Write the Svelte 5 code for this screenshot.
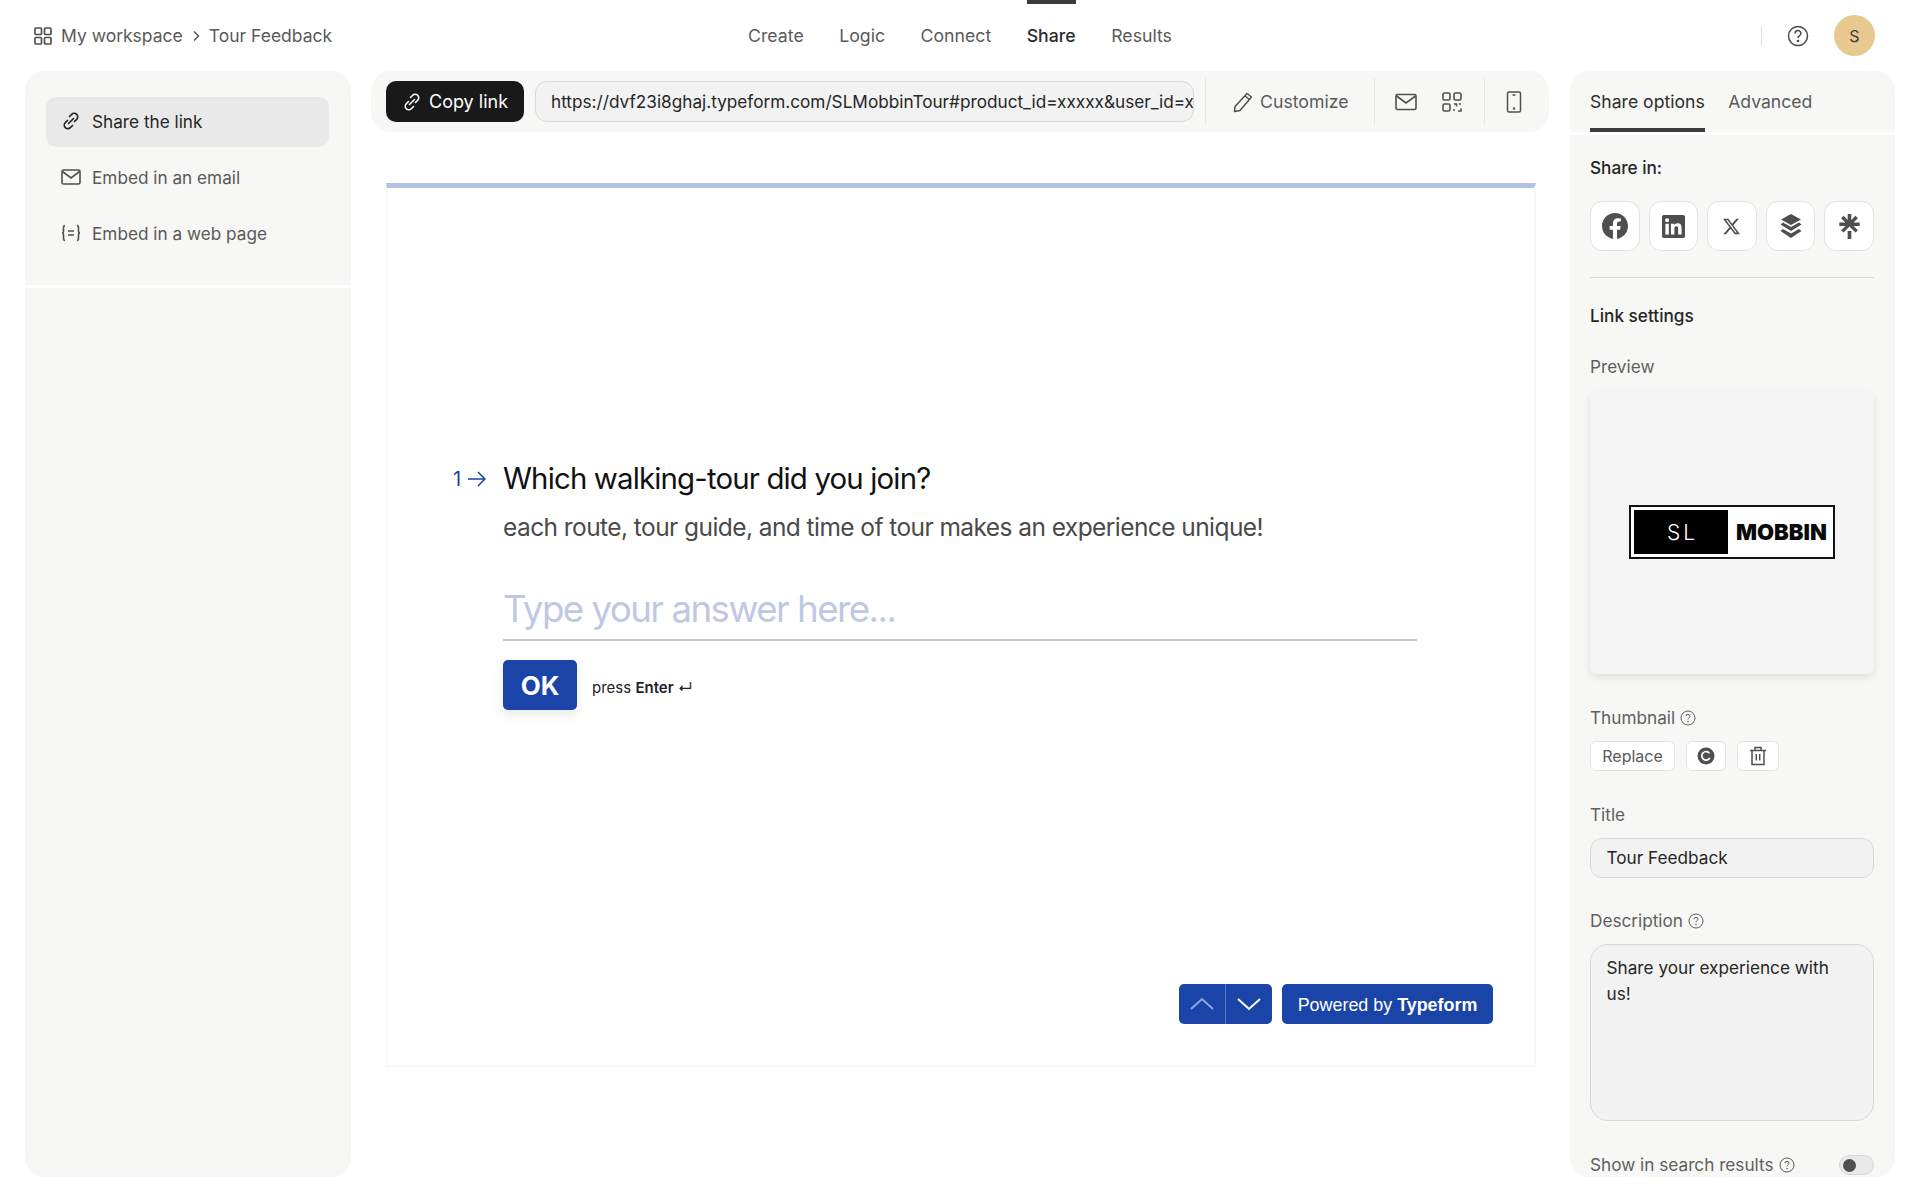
<script>
  let navItems = ['Create', 'Logic', 'Connect', 'Share', 'Results'];
  let activeNav = 'Share';
</script>

<div class="page">
  <header class="topbar">
    <div class="crumbs">
      <svg width="20" height="20" viewBox="0 0 20 20" fill="none" stroke="#4f4f4f" stroke-width="1.7">
        <rect x="2" y="2" width="6.5" height="6.5" rx="1" /><rect x="11.5" y="2" width="6.5" height="6.5" rx="1" />
        <rect x="2" y="11.5" width="6.5" height="6.5" rx="1" /><rect x="11.5" y="11.5" width="6.5" height="6.5" rx="1" />
      </svg>
      <span>My workspace</span>
      <svg width="10" height="12" viewBox="0 0 10 12" fill="none" stroke="#4f4f4f" stroke-width="1.4"><path d="M3 1.5 7.5 6 3 10.5" /></svg>
      <span>Tour Feedback</span>
    </div>
    <nav class="nav">
      {#each navItems as item}
        <span class="nav-item" class:active={item === activeNav}>{item}</span>
      {/each}
    </nav>
    <div class="top-right">
      <span class="top-div"></span>
      <svg width="22" height="22" viewBox="0 0 22 22" fill="none" stroke="#4a4a4a" stroke-width="1.5">
        <circle cx="11" cy="11" r="9.5" />
        <path d="M8 8.6a3 3 0 0 1 6 0c0 2-3 2.2-3 4.4" />
        <circle cx="11" cy="16" r=".6" fill="#4a4a4a" />
      </svg>
      <span class="avatar">S</span>
    </div>
  </header>

  <div class="body">
    <aside class="left">
      <div class="left-menu">
        <div class="menu-item selected">
          <svg class="ico" viewBox="0 0 20 20" fill="none" stroke="#262626" stroke-width="1.7" stroke-linecap="round">
            <path d="M8.5 5.5 10.7 3.3a3.5 3.5 0 0 1 5 5l-2.2 2.2" />
            <path d="M11.5 14.5 9.3 16.7a3.5 3.5 0 0 1-5-5l2.2-2.2" />
            <path d="M7.5 12.5l5-5" />
          </svg>
          <span>Share the link</span>
        </div>
        <div class="menu-item">
          <svg class="ico" viewBox="0 0 20 20" fill="none" stroke="#4f4f4f" stroke-width="1.6">
            <rect x="1" y="3" width="18" height="14" rx="1.5" /><path d="M1.5 4.500 10 11l8.500-6.500" />
          </svg>
          <span>Embed in an email</span>
        </div>
        <div class="menu-item">
          <svg class="ico" viewBox="0 0 20 20" fill="none" stroke="#4f4f4f" stroke-width="1.6">
            <path d="M4 2.500C2.500 2.500 2.500 3.500 2.500 5v3c0 1-.5 2-1.500 2 1 0 1.500 1 1.500 2v3c0 1.500 0 2.500 1.500 2.500" />
            <path d="M16 2.500c1.500 0 1.500 1 1.500 2.500v3c0 1 .5 2 1.500 2-1 0-1.500 1-1.500 2v3c0 1.500 0 2.500-1.500 2.500" />
            <path d="M7 8h6M7 12h6" />
          </svg>
          <span>Embed in a web page</span>
        </div>
      </div>
      <div class="left-rest"></div>
    </aside>

    <main class="center">
      <div class="toolbar">
        <button class="copy">
          <svg width="20" height="20" viewBox="0 0 20 20" fill="none" stroke="#fff" stroke-width="1.6" stroke-linecap="round">
            <path d="M8.500 5.500 10.700 3.300a3.500 3.500 0 0 1 5 5l-2.200 2.200" />
            <path d="M11.500 14.500 9.300 16.700a3.500 3.500 0 0 1-5-5l2.200-2.200" />
            <path d="M7.500 12.500l5-5" />
          </svg>
          Copy link
        </button>
        <div class="url"><span>https://dvf23i8ghaj.typeform.com/SLMobbinTour#product_id=xxxxx&user_id=xxxxx</span></div>
        <span class="tool-div first"></span>
        <div class="customize">
          <svg width="22" height="22" viewBox="0 0 22 22" fill="none" stroke="#4f4f4f" stroke-width="1.5" stroke-linejoin="round">
            <path d="M15 2.500 19.500 6 8 19.500 2.500 20.500 3 15.500Z" /><path d="M13 5l4.500 3.500" />
          </svg>
          <span>Customize</span>
        </div>
        <span class="tool-div"></span>
        <svg class="t-mail" width="22" height="18" viewBox="0 0 22 18" fill="none" stroke="#4f4f4f" stroke-width="1.6">
          <rect x="1" y="1.500" width="20" height="15" rx="1.500" /><path d="M1.500 3 11 10l9.500-7" />
        </svg>
        <svg class="t-qr" width="20" height="20" viewBox="0 0 20 20" fill="none" stroke="#4f4f4f" stroke-width="1.6">
          <rect x="1" y="1" width="7" height="7" rx="1.500" /><rect x="12" y="1" width="7" height="7" rx="1.500" />
          <rect x="1" y="12" width="7" height="7" rx="1.500" />
          <path d="M12 12h2.500v2.500M19 12h-2M12 19v-2M16 19h3v-2.500" stroke-width="1.500" />
        </svg>
        <span class="tool-div qr-div"></span>
        <svg class="t-phone" width="16" height="22" viewBox="0 0 16 22" fill="none" stroke="#4f4f4f" stroke-width="1.500">
          <rect x="1.500" y="1" width="13" height="20" rx="1.500" /><path d="M6.500 4h3" /><circle cx="8" cy="17.500" r=".5" fill="#4f4f4f" />
        </svg>
      </div>

      <section class="frame">
        <div class="question">
          <div class="q-num">
            <span>1</span>
            <svg width="19" height="16" viewBox="0 0 19 16" fill="none" stroke="#1a44a8" stroke-width="1.500"><path d="M1 8h17M11 1l7 7-7 7" /></svg>
          </div>
          <div class="q-body">
            <h1>Which walking-tour did you join?</h1>
            <p class="q-sub">each route, tour guide, and time of tour makes an experience unique!</p>
            <div class="answer">Type your answer here...</div>
            <div class="ok-row">
              <button class="ok">OK</button>
              <span class="press">press <b>Enter</b> ↵</span>
            </div>
          </div>
        </div>
        <div class="frame-foot">
          <div class="arrows">
            <span class="arrow">
              <svg width="24" height="14" viewBox="0 0 24 14" fill="none" stroke="#8ea6dc" stroke-width="2"><path d="M1 12 12 2l11 10" /></svg>
            </span>
            <span class="arrow">
              <svg width="24" height="14" viewBox="0 0 24 14" fill="none" stroke="#fff" stroke-width="2"><path d="M1 2l11 10L23 2" /></svg>
            </span>
          </div>
          <span class="powered">Powered by&nbsp;<b>Typeform</b></span>
        </div>
      </section>
    </main>

    <aside class="right">
      <div class="tabs">
        <span class="tab on">Share options</span>
        <span class="tab">Advanced</span>
      </div>
      <div class="options">
        <div class="share-label">Share in:</div>
        <div class="socials">
          <span class="social">
            <svg width="26" height="26" viewBox="0 0 24 24" fill="#4f4f4f"><path d="M24 12.073c0-6.627-5.373-12-12-12s-12 5.373-12 12c0 5.990 4.388 10.954 10.125 11.854v-8.385H7.078v-3.470h3.047V9.430c0-3.007 1.792-4.669 4.533-4.669 1.312 0 2.686.235 2.686.235v2.953H15.830c-1.491 0-1.956.925-1.956 1.874v2.250h3.328l-.532 3.470h-2.796v8.385C19.612 23.027 24 18.062 24 12.073z" /></svg>
          </span>
          <span class="social">
            <svg width="23" height="23" viewBox="0 0 24 24" fill="#4f4f4f"><path d="M20.447 20.452h-3.554v-5.569c0-1.328-.027-3.037-1.852-3.037-1.853 0-2.136 1.445-2.136 2.939v5.667H9.351V9h3.414v1.561h.046c.477-.9 1.637-1.850 3.370-1.850 3.601 0 4.267 2.370 4.267 5.455v6.286zM5.337 7.433c-1.144 0-2.063-.926-2.063-2.065 0-1.138.92-2.063 2.063-2.063 1.140 0 2.064.925 2.064 2.063 0 1.139-.925 2.065-2.064 2.065zm1.782 13.019H3.555V9h3.564v11.452zM22.225 0H1.771C.792 0 0 .774 0 1.729v20.542C0 23.227.792 24 1.771 24h20.451C23.200 24 24 23.227 24 22.271V1.729C24 .774 23.200 0 22.222 0h.003z" /></svg>
          </span>
          <span class="social">
            <svg width="17" height="17" viewBox="0 0 24 24" fill="#4f4f4f"><path d="M18.901 1.153h3.680l-8.040 9.190L24 22.846h-7.406l-5.800-7.584-6.638 7.584H.474l8.600-9.830L0 1.154h7.594l5.243 6.932ZM17.610 20.644h2.039L6.486 3.240H4.298Z" /></svg>
          </span>
          <span class="social">
            <svg width="22" height="25" viewBox="0 0 22 25" fill="#4f4f4f">
              <path d="M11 0 21 5.500 11 11 1 5.500Z" />
              <path d="M3 8.500 11 13l8-4.500 2.500 2L11 17 .5 10.500Z" />
              <path d="M3 15 11 19.500l8-4.500 2.500 2L11 24 .5 17Z" />
            </svg>
          </span>
          <span class="social">
            <svg width="25" height="25" viewBox="0 0 24 24" fill="#4f4f4f"><path d="M13.736 5.853l4.005-4.117 2.325 2.381-4.201 4.005h5.909v3.305h-5.937l4.229 4.108-2.325 2.334-5.741-5.769-5.741 5.769-2.325-2.325 4.229-4.108H2.208V8.122h5.909L3.916 4.117l2.325-2.381 4.005 4.117V0h3.490zm-3.490 10.457h3.490V24h-3.490z" /></svg>
          </span>
        </div>
        <hr />
        <div class="settings-title">Link settings</div>
        <div class="label preview-label">Preview</div>
        <div class="preview">
          <div class="logo">
            <span class="logo-sl">SL</span>
            <span class="logo-name">MOBBIN</span>
          </div>
        </div>
        <div class="label thumb-label">
          Thumbnail
          <svg class="hint" viewBox="0 0 16 16" fill="none" stroke="#5a5a5a" stroke-width="1"><circle cx="8" cy="8" r="7" /><path d="M6 6.300a2 2 0 0 1 4 0c0 1.400-2 1.500-2 3" /><circle cx="8" cy="11.500" r=".4" /></svg>
        </div>
        <div class="thumb-btns">
          <span class="small-btn replace">Replace</span>
          <span class="small-btn reload">
            <svg width="18" height="18" viewBox="0 0 18 18"><circle cx="9" cy="9" r="8.500" fill="#4f4f4f" /><path d="M12.500 6.200A4.300 4.300 0 1 0 12.800 11" fill="none" stroke="#fff" stroke-width="1.700" /></svg>
          </span>
          <span class="small-btn trash">
            <svg width="18" height="20" viewBox="0 0 18 20" fill="none" stroke="#4f4f4f" stroke-width="1.500"><path d="M1 4.500h16M6 4.500V1.500h6v3M3 4.500V18.500h12V4.500M7.300 8v6.500M10.700 8v6.500" /></svg>
          </span>
        </div>
        <div class="label title-label">Title</div>
        <div class="field">Tour Feedback</div>
        <div class="label desc-label">
          Description
          <svg class="hint" viewBox="0 0 16 16" fill="none" stroke="#5a5a5a" stroke-width="1"><circle cx="8" cy="8" r="7" /><path d="M6 6.300a2 2 0 0 1 4 0c0 1.400-2 1.500-2 3" /><circle cx="8" cy="11.500" r=".4" /></svg>
        </div>
        <div class="textarea">Share your experience with us!</div>
        <div class="search-row">
          <span class="label">
            Show in search results
            <svg class="hint" viewBox="0 0 16 16" fill="none" stroke="#5a5a5a" stroke-width="1"><circle cx="8" cy="8" r="7" /><path d="M6 6.300a2 2 0 0 1 4 0c0 1.400-2 1.500-2 3" /><circle cx="8" cy="11.500" r=".4" /></svg>
          </span>
          <span class="toggle"><span class="knob"></span></span>
        </div>
      </div>
    </aside>
  </div>
</div>

<style>
  :global(body) {
    margin: 0;
    background: #ffffff;
  }

  .page {
    width: 1920px;
    height: 1200px;
    overflow: hidden;
    font-family: Inter, "Liberation Sans", sans-serif;
    font-size: 17.2px;
    color: #5a5a5a;
    display: flex;
    flex-direction: column;
  }

  /* top bar */
  .topbar {
    height: 71px;
    flex: none;
    display: grid;
    grid-template-columns: 1fr auto 1fr;
    align-items: center;
    padding: 0 45px 0 33px;
    box-sizing: border-box;
    font-size: 17.5px;
  }
  .crumbs {
    display: flex;
    align-items: center;
    gap: 8px;
    color: #5a5a5a;
  }
  .nav {
    display: flex;
    gap: 35.5px;
    height: 100%;
    font-size: 17.7px;
    position: relative;
    left: 6px;
  }
  .nav-item {
    display: flex;
    align-items: center;
    box-sizing: border-box;
    height: 100%;
    border-top: 4px solid transparent;
    padding-bottom: 4px;
  }
  .nav-item.active {
    color: #2c2c2c;
    font-weight: 500;
    border-top-color: #3b3b3b;
  }
  .top-right {
    display: flex;
    align-items: center;
    justify-content: flex-end;
  }
  .top-div {
    width: 1px;
    height: 20px;
    background: #e2e2e2;
    margin-right: 25px;
  }
  .avatar {
    width: 41px;
    height: 41px;
    border-radius: 50%;
    background: #e8c98f;
    color: #3d3d3d;
    font-size: 16px;
    display: flex;
    align-items: center;
    justify-content: center;
    margin-left: 25px;
  }

  /* three columns */
  .body {
    flex: 1;
    min-height: 0;
    display: flex;
    padding: 0 25px 23px 25px;
  }

  .left {
    width: 326px;
    flex: none;
    display: flex;
    flex-direction: column;
    gap: 3px;
    border-radius: 20px;
    overflow: hidden;
  }
  .left-menu {
    height: 214px;
    flex: none;
    background: #f7f7f5;
    padding: 26px 22px 0 21px;
    box-sizing: border-box;
  }
  .left-rest {
    flex: 1;
    background: #f7f7f5;
  }
  .menu-item {
    height: 50px;
    box-sizing: border-box;
    margin-bottom: 6px;
    display: flex;
    align-items: center;
    gap: 11px;
    padding: 0 0 2px 15px;
    border-radius: 10px;
    color: #5a5a5a;
  }
  .menu-item.selected {
    background: #e9e9e9;
    color: #262626;
  }
  .ico {
    width: 20px;
    height: 20px;
    flex: none;
  }

  .center {
    width: 1178px;
    flex: none;
    margin: 0 21px 0 20px;
  }
  .toolbar {
    height: 61px;
    background: #f7f7f5;
    border-radius: 20px;
    display: flex;
    align-items: center;
    padding-left: 15px;
    box-sizing: border-box;
  }
  .copy {
    width: 138px;
    height: 41px;
    border: none;
    border-radius: 10px;
    background: #191919;
    color: #ffffff;
    font: inherit;
    font-size: 18px;
    display: flex;
    align-items: center;
    justify-content: center;
    gap: 7px;
    padding: 0;
  }
  .url {
    width: 659px;
    height: 41px;
    box-sizing: border-box;
    margin-left: 11px;
    border: 1px solid #d7d7d7;
    border-radius: 12px;
    background: #f2f2f2;
    color: #262626;
    padding: 0 0 0 15px;
    display: flex;
    align-items: center;
    overflow: hidden;
    white-space: nowrap;
  }
  .tool-div {
    width: 1px;
    height: 47px;
    background: #e6e6e4;
    flex: none;
  }
  .tool-div.first {
    margin-left: 11px;
  }
  .customize {
    display: flex;
    align-items: center;
    gap: 6px;
    width: 168px;
    box-sizing: border-box;
    padding-left: 26px;
    font-size: 17.7px;
  }
  .t-mail {
    margin-left: 20px;
  }
  .t-qr {
    margin-left: 25px;
  }
  .qr-div {
    margin-left: 22px;
  }
  .t-phone {
    margin-left: 21px;
  }

  /* form frame */
  .frame {
    margin: 51px 13px 0 15px;
    height: 884px;
    box-sizing: border-box;
    border-top: 5px solid #b4c3e3;
    border-left: 1px solid #f8f8f8;
    border-right: 2px solid #f8f8f8;
    border-bottom: 2px solid #f8f8f8;
    display: flex;
    flex-direction: column;
    background: #ffffff;
  }
  .question {
    display: flex;
    padding: 273px 0 0 66px;
  }
  .q-num {
    width: 50px;
    flex: none;
    display: flex;
    align-items: center;
    gap: 6px;
    height: 36px;
    color: #1a44a8;
    font-size: 20px;
  }
  .q-body {
    width: 914px;
  }
  h1 {
    margin: 0;
    font-size: 29.400px;
    font-weight: 400;
    letter-spacing: -0.84px;
    line-height: 36px;
    color: #111111;
  }
  .q-sub {
    margin: 12px 0 0;
    font-size: 24.500px;
    letter-spacing: -0.57px;
    line-height: 36px;
    color: #4a4a4a;
  }
  .answer {
    margin-top: 29px;
    height: 67px;
    box-sizing: border-box;
    border-bottom: 2px solid #c8c8c8;
    font-size: 36.700px;
    letter-spacing: -1.55px;
    line-height: 69px;
    color: #bfc8e3;
  }
  .ok-row {
    display: flex;
    align-items: center;
    margin-top: 19px;
  }
  .ok {
    width: 74px;
    height: 50px;
    border: none;
    border-radius: 5px;
    background: #1a44a8;
    color: #ffffff;
    font: inherit;
    font-size: 26px;
    font-weight: 700;
    padding: 0;
    box-shadow: 0 4px 12px rgba(0, 0, 0, 0.1);
  }
  .press {
    margin-left: 15px;
    font-size: 15px;
    color: #222222;
    padding-top: 4px;
  }
  .press b {
    font-weight: 600;
  }
  .frame-foot {
    margin-top: auto;
    display: flex;
    justify-content: flex-end;
    gap: 10px;
    padding: 0 41px 41px 0;
  }
  .arrows {
    display: flex;
    width: 93px;
    height: 40px;
    border-radius: 5px;
    background: #1a44a8;
    overflow: hidden;
  }
  .arrow {
    flex: 1;
    display: flex;
    align-items: center;
    justify-content: center;
  }
  .arrow + .arrow {
    border-left: 1px solid #5d7cc4;
  }
  .powered {
    width: 211px;
    height: 40px;
    box-sizing: border-box;
    padding-top: 2px;
    border-radius: 5px;
    background: #1a44a8;
    color: #ffffff;
    font-family: "Liberation Sans", sans-serif;
    font-size: 17.9px;
    display: flex;
    align-items: center;
    justify-content: center;
  }
  .powered b {
    font-weight: 700;
  }

  /* right panel */
  .right {
    width: 325px;
    flex: none;
    border-radius: 20px;
    overflow: hidden;
    display: flex;
    flex-direction: column;
    gap: 3px;
  }
  .tabs {
    height: 61px;
    flex: none;
    display: flex;
    gap: 23.5px;
    padding-left: 20px;
    background: #f7f7f5;
    font-size: 17.6px;
  }
  .tab {
    height: 100%;
    box-sizing: border-box;
    display: flex;
    align-items: center;
    border-bottom: 4px solid transparent;
    padding-bottom: 0;
    padding-top: 4px;
  }
  .tab.on {
    color: #2c2c2c;
    border-bottom-color: #3b3b3b;
  }
  .options {
    flex: 1;
    background: #f7f7f5;
    padding: 21px 21px 0 20px;
    min-height: 0;
    overflow: hidden;
  }
  .share-label {
    color: #262626;
    font-weight: 500;
    line-height: 24px;
  }
  .socials {
    display: flex;
    gap: 9px;
    margin-top: 21px;
  }
  .social {
    flex: 1;
    height: 50px;
    box-sizing: border-box;
    border: 1px solid #e2e2e2;
    border-radius: 12px;
    background: #ffffff;
    display: flex;
    align-items: center;
    justify-content: center;
  }
  hr {
    margin: 26px 0 0;
    border: none;
    border-top: 1px solid #d9d9d9;
  }
  .settings-title {
    margin-top: 26px;
    color: #262626;
    font-weight: 500;
    line-height: 24px;
  }
  .label {
    line-height: 24px;
    color: #5f5f5f;
    display: flex;
    align-items: center;
    gap: 5px;
  }
  .preview-label {
    margin-top: 27px;
  }
  .preview {
    margin-top: 13px;
    height: 282px;
    box-sizing: border-box;
    padding-bottom: 2px;
    border-radius: 6px;
    background: #f5f5f5;
    box-shadow: 0 3px 8px rgba(0, 0, 0, 0.1);
    display: flex;
    align-items: center;
    justify-content: center;
  }
  .logo {
    width: 206px;
    height: 54px;
    box-sizing: border-box;
    border: 2px solid #111111;
    background: #ffffff;
    padding: 3px;
    display: flex;
    align-items: stretch;
  }
  .logo-sl {
    width: 94px;
    box-sizing: border-box;
    padding-left: 3px;
    background: #000000;
    color: #ffffff;
    font-size: 21px;
    font-weight: 300;
    letter-spacing: 3px;
    display: flex;
    align-items: center;
    justify-content: center;
  }
  .logo-name {
    margin-left: 8px;
    color: #0a0a0a;
    font-size: 22px;
    font-weight: 900;
    display: flex;
    align-items: center;
  }
  .thumb-label {
    margin-top: 32px;
  }
  .hint {
    width: 16px;
    height: 16px;
  }
  .thumb-btns {
    display: flex;
    gap: 11px;
    margin-top: 11px;
  }
  .small-btn {
    height: 30px;
    box-sizing: border-box;
    border: 1px solid #e2e2e2;
    border-radius: 6px;
    background: #ffffff;
    display: flex;
    align-items: center;
    justify-content: center;
    font-size: 16px;
    color: #5a5a5a;
  }
  .replace {
    width: 85px;
  }
  .reload {
    width: 40px;
  }
  .trash {
    width: 42px;
  }
  .title-label {
    margin-top: 32px;
  }
  .field {
    margin-top: 11px;
    height: 40px;
    box-sizing: border-box;
    border: 1px solid #d7d7d7;
    border-radius: 12px;
    background: #f2f2f2;
    color: #262626;
    padding: 0 0 2px 15.5px;
    display: flex;
    align-items: center;
  }
  .desc-label {
    margin-top: 31px;
  }
  .textarea {
    margin-top: 11px;
    height: 177px;
    box-sizing: border-box;
    border: 1px solid #d7d7d7;
    border-radius: 18px;
    background: #f2f2f2;
    color: #262626;
    padding: 10px 25px 10px 15.5px;
    line-height: 25.500px;
  }
  .search-row {
    margin-top: 32px;
    display: flex;
    align-items: center;
    justify-content: space-between;
  }
  .toggle {
    width: 35px;
    height: 20px;
    box-sizing: border-box;
    border: 1px solid #d7d7d7;
    border-radius: 10px;
    background: #e9e9e9;
    display: flex;
    align-items: center;
    padding-left: 3px;
  }
  .knob {
    width: 13px;
    height: 13px;
    border-radius: 50%;
    background: #4f4f4f;
  }
</style>
